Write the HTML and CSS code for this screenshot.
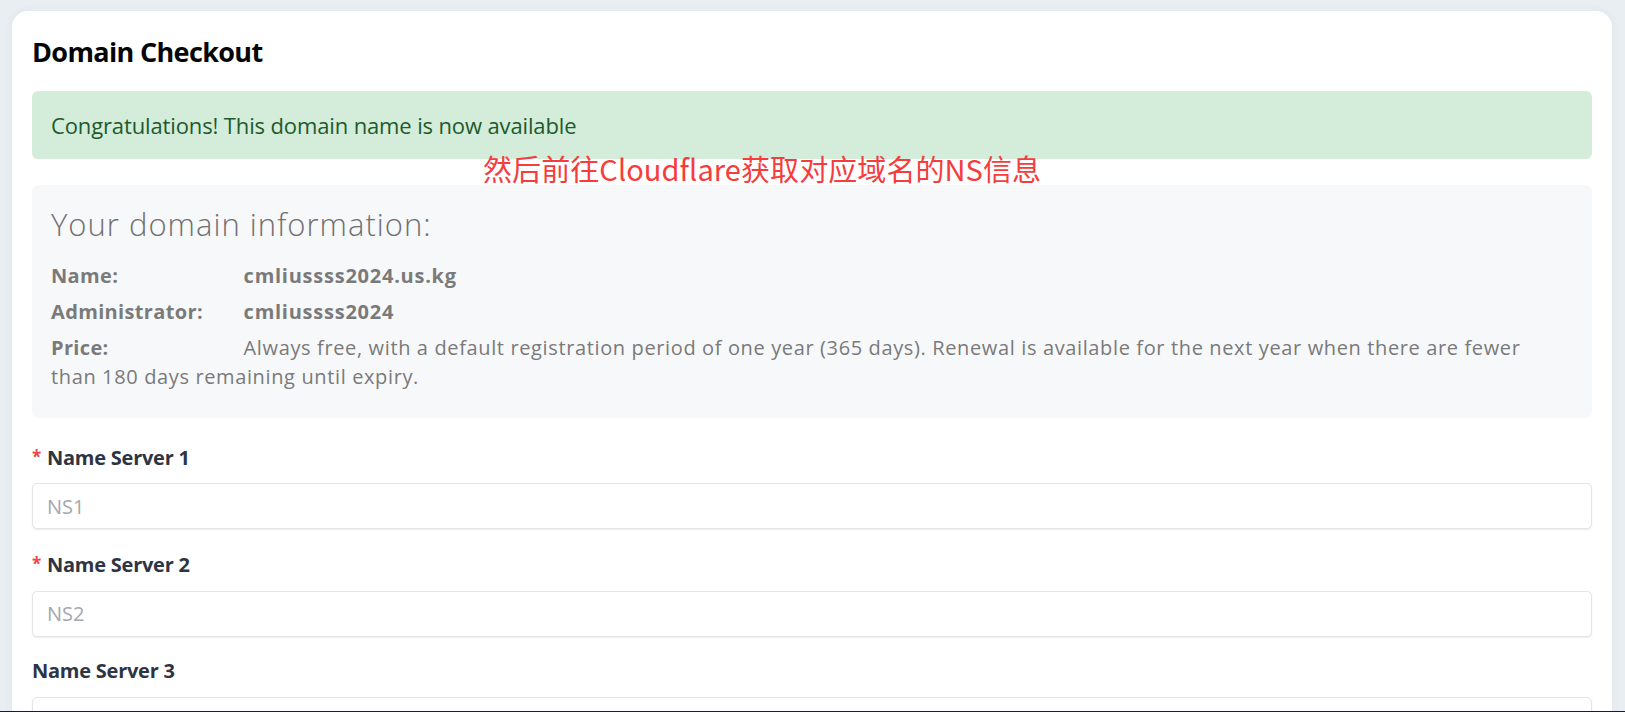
FILE: index.html
```html
<!DOCTYPE html>
<html lang="en">
<head>
<meta charset="utf-8">
<title>Domain Checkout</title>
<link rel="stylesheet" href="styles.css">
</head>
<body>
<div class="page">
  <div class="card">
    <h1 class="title">Domain Checkout</h1>
    <div class="alert">Congratulations! This domain name is now available</div>
    <div class="note">然后前往Cloudflare获取对应域名的NS信息</div>
    <div class="info">
      <h2 class="info-head">Your domain information:</h2>
      <p class="row"><strong class="k">Name:</strong><strong class="v">cmliussss2024.us.kg</strong></p>
      <p class="row"><strong class="k">Administrator:</strong><strong class="v">cmliussss2024</strong></p>
      <p class="row"><strong class="k">Price:</strong>Always free, with a default registration period of one year (365 days). Renewal is available for the next year when there are fewer than 180 days remaining until expiry.</p>
    </div>
    <form class="form">
      <div class="field">
        <label class="label"><span class="req">*</span> Name Server 1</label>
        <input class="input" type="text" placeholder="NS1">
      </div>
      <div class="field">
        <label class="label"><span class="req">*</span> Name Server 2</label>
        <input class="input" type="text" placeholder="NS2">
      </div>
      <div class="field">
        <label class="label">Name Server 3</label>
        <input class="input" type="text" placeholder="NS3">
      </div>
    </form>
  </div>
</div>
<div class="edge"></div>
</body>
</html>
```

FILE: styles.css
```css
html, body {
  margin: 0;
  padding: 0;
  height: 100%;
  overflow: hidden;
}
body {
  background: #e9eef3;
  font-family: "Open Sans", "Noto Sans", sans-serif;
  color: #777;
}
.page {
  padding: 11px 13px 0 12px;
}
.card {
  position: relative;
  background: #fff;
  border-radius: 16px;
  padding: 21px 20px 40px;
  box-shadow: 0 0 10px rgba(30, 50, 80, 0.05);
}
.title {
  margin: 0 0 19px;
  font-size: 27px;
  line-height: 40px;
  font-weight: 700;
  letter-spacing: -0.65px;
  color: #050505;
}
.alert {
  background: #d4ecda;
  color: #1d5a2c;
  border-radius: 6px;
  padding: 18.5px 19px 19.5px;
  font-size: 22px;
  line-height: 30px;
  letter-spacing: -0.13px;
}
.note {
  position: absolute;
  left: 471px;
  top: 143px;
  font-family: "Noto Sans CJK SC", sans-serif;
  font-size: 29px;
  line-height: 29px;
  letter-spacing: 0.08px;
  color: #f63c3c;
  white-space: nowrap;
  z-index: 2;
}
.info {
  margin-top: 26px;
  background: #f7f8fa;
  border-radius: 6px;
  padding: 18.5px 26px 19.5px 19px;
}
.info-head {
  margin: 0 0 17px;
  font-size: 31px;
  line-height: 40px;
  font-weight: 300;
  letter-spacing: 1px;
  color: #707070;
}
.row {
  margin: 0 0 7px;
  font-size: 20px;
  line-height: 29.3px;
  letter-spacing: 0.63px;
  color: #7a7a7a;
}
.k {
  display: inline-block;
  width: 192.6px;
  font-weight: 700;
  letter-spacing: 0.35px;
}
.v {
  font-weight: 700;
  letter-spacing: 0.75px;
}
.form {
  margin-top: 23.5px;
}
.field {
  margin-bottom: 19.6px;
}
.label {
  display: block;
  margin-bottom: 10.8px;
  font-size: 20px;
  line-height: 30px;
  font-weight: 700;
  letter-spacing: -0.24px;
  color: #2d3544;
}
.req {
  display: inline-block;
  color: #ef4444;
  font-size: 17px;
  vertical-align: 2px;
  margin-right: 1px;
}
.input {
  display: block;
  box-sizing: border-box;
  width: 100%;
  height: 46px;
  margin: 0;
  padding: 0 14px;
  border: 1px solid #e3e4e7;
  border-radius: 5px;
  box-shadow: 0 1px 2px rgba(0, 0, 0, 0.07);
  background: #fff;
  font-family: "Open Sans", "Noto Sans", sans-serif;
  font-size: 20px;
  color: #333;
  outline: none;
}
.input::placeholder {
  color: #a3a7ae;
}
.edge {
  position: fixed;
  left: 0;
  right: 0;
  bottom: 0;
  height: 1px;
  background: #1c1d2a;
}
```
